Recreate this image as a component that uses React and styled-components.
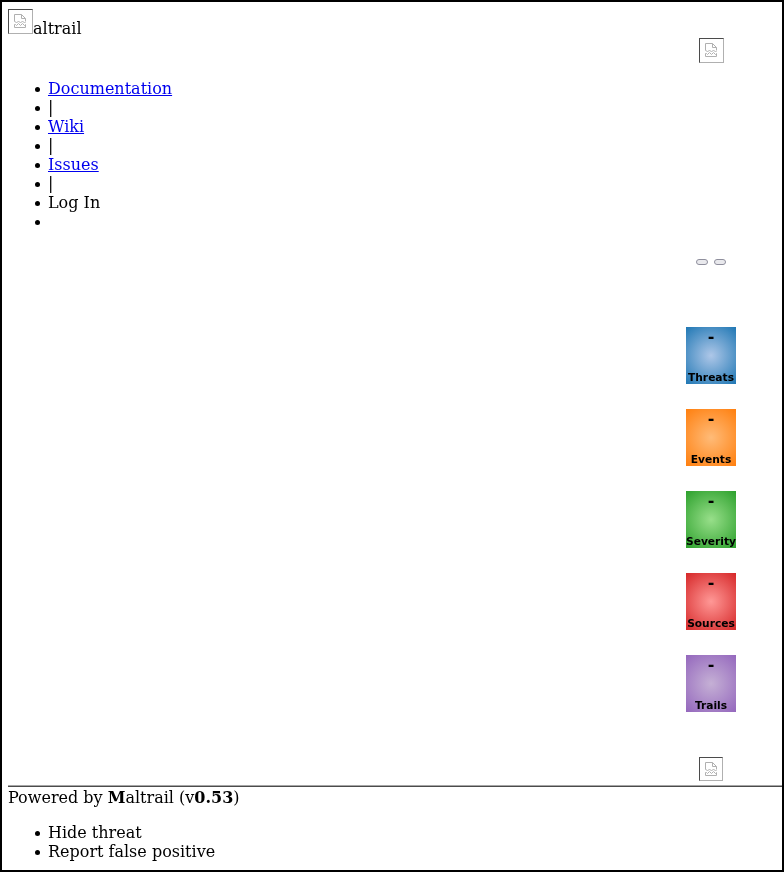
import React from "react";
import styled, { createGlobalStyle } from "styled-components";

const GlobalStyle = createGlobalStyle`
  body { margin: 0; background: #fff; }
`;

const Page = styled.div`
  box-sizing: border-box;
  display: flex;
  flex-direction: column;
  height: 872px;
  padding: 7px 0 0 6px;
  border: 2px solid #000;
  font: 16px/19px "DejaVu Serif", serif;
  color: #000;
  overflow: hidden;
  will-change: transform;
`;

const Columns = styled.main`
  display: flex;
  justify-content: space-between;
  height: 776px;
`;

const Brand = styled.header`
  display: flex;
  height: 70px;
`;

const BrandName = styled.span`
  margin-top: 10px;
`;

const List = styled.ul`
  margin: 0;
  padding: 0 0 0 26.5px;
  list-style: none;
`;

const Item = styled.li`
  display: flex;
  height: 19px;

  &::before {
    content: "";
    flex: none;
    width: 5.6px;
    height: 5.6px;
    margin: 7.6px 7.9px 0 0;
    border-radius: 50%;
    background: #000;
  }
`;

const Link = styled.a`
  color: #0000ee;
  text-decoration: underline;
`;

const Side = styled.aside`
  display: flex;
  flex-direction: column;
  align-items: flex-start;
  width: 96px;
  padding-top: 29px;
`;

const ImageFrame = styled.span`
  box-sizing: border-box;
  flex: none;
  width: ${(p) => p.$size}px;
  height: ${(p) => p.$size}px;
  margin: ${(p) => p.$margin || "0"};
  padding: 4px 5px;
  border: 1px solid;
  border-color: #4b4b4b #b0b0b0 #b0b0b0 #4b4b4b;
`;

const IconSvg = styled.svg`
  display: block;
  width: 12px;
  height: 14px;
`;

const ButtonPair = styled.div`
  display: flex;
  gap: 6px;
  margin: 196px 0 62px 10px;
`;

const TinyButton = styled.button`
  box-sizing: border-box;
  width: 12px;
  height: 6px;
  padding: 0;
  border: 1px solid #8f8f9d;
  border-radius: 3px;
  background: #e9e9ed;
`;

const Tiles = styled.div`
  display: flex;
  flex-direction: column;
  gap: 25px;
`;

const Tile = styled.div`
  box-sizing: border-box;
  display: flex;
  flex-direction: column;
  align-items: center;
  justify-content: space-between;
  width: 50px;
  height: 57px;
  background: radial-gradient(circle at 50% 50%, ${(p) => p.$inner}, ${(p) => p.$outer});
  font-family: "DejaVu Sans", sans-serif;
  font-weight: bold;
  white-space: nowrap;
`;

const TileValue = styled.span`
  font-size: 16px;
  line-height: 19px;
`;

const TileLabel = styled.span`
  font-size: 10.67px;
  line-height: 13px;
`;

const Footer = styled.footer`
  height: 37px;
  border-top: 1px solid #a6a6a6;
`;

const Credit = styled.div`
  border-top: 1px solid #4b4b4b;
  padding-top: 1px;
`;

function BrokenImage({ size, margin }) {
  return (
    <ImageFrame $size={size} $margin={margin}>
      <IconSvg viewBox="0 0 12 14" fill="none" stroke="#b0b0b0">
        <path d="M.5 7.5V.5h7l4 4v3M7.5.5v4h4" />
        <path d="M.5 7l2 2 2-2 2 2 2-2 2 2 1-1" />
        <path d="M.5 13.5v-3h1l1 1 2-2 2 2 2-2 2 2 1-1v3z" />
      </IconSvg>
    </ImageFrame>
  );
}

const links = ["Documentation", "Wiki", "Issues"];
const stats = [
  ["Threats", "#aec7e8", "#1f77b4"],
  ["Events", "#ffbb78", "#ff7f0e"],
  ["Severity", "#98df8a", "#2ca02c"],
  ["Sources", "#ff9896", "#d62728"],
  ["Trails", "#c5b0d5", "#9467bd"],
];

export default function App() {
  return (
    <>
      <GlobalStyle />
      <Page>
        <Columns>
          <div>
            <Brand>
              <BrokenImage size={25} />
              <BrandName>altrail</BrandName>
            </Brand>
            <List>
              {links.map((name) => (
                <React.Fragment key={name}>
                  <Item><Link href="#">{name}</Link></Item>
                  <Item>|</Item>
                </React.Fragment>
              ))}
              <Item>Log In</Item>
              <Item />
            </List>
          </div>
          <Side>
            <BrokenImage size={25} margin="0 0 0 13px" />
            <ButtonPair>
              <TinyButton aria-label="Previous" />
              <TinyButton aria-label="Next" />
            </ButtonPair>
            <Tiles>
              {stats.map(([label, inner, outer]) => (
                <Tile key={label} $inner={inner} $outer={outer}>
                  <TileValue>-</TileValue>
                  <TileLabel>{label}</TileLabel>
                </Tile>
              ))}
            </Tiles>
            <BrokenImage size={24} margin="45px 0 0 13px" />
          </Side>
        </Columns>
        <Footer>
          <Credit>Powered by <b>M</b>altrail (v<b>0.53</b>)</Credit>
        </Footer>
        <List>
          <Item>Hide threat</Item>
          <Item>Report false positive</Item>
        </List>
      </Page>
    </>
  );
}
